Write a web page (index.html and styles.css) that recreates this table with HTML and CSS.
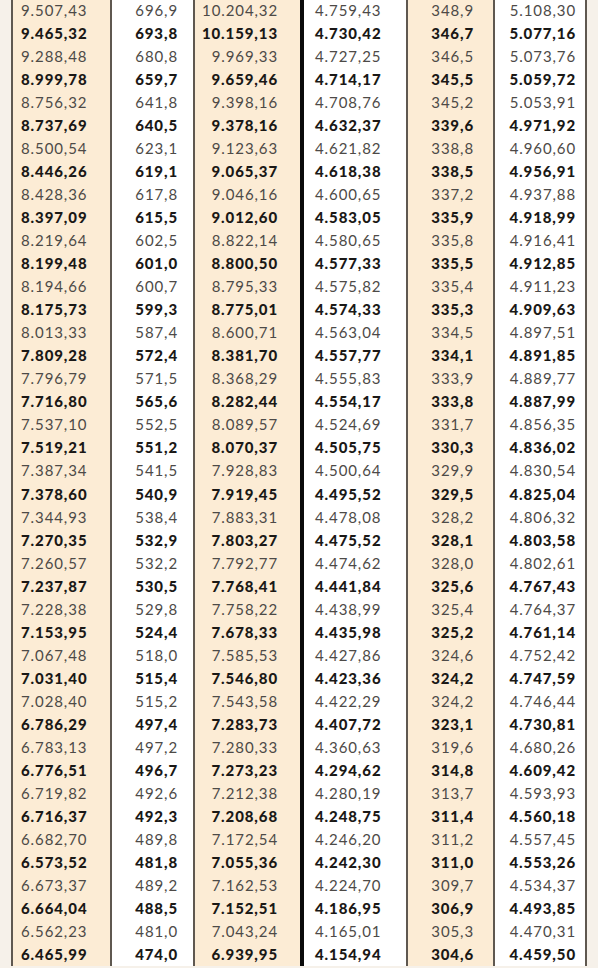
FILE: index.html
```html
<!DOCTYPE html>
<html lang="tr">
<head>
<meta charset="utf-8">
<title>Tablo</title>
<link rel="stylesheet" href="styles.css">
</head>
<body>
<div class="sheet">
<div class="grid">
<div class="c">9.507,43</div><div class="c">696,9</div><div class="c">10.204,32</div><div class="c">4.759,43</div><div class="c">348,9</div><div class="c">5.108,30</div>
<div class="c b">9.465,32</div><div class="c b">693,8</div><div class="c b">10.159,13</div><div class="c b">4.730,42</div><div class="c b">346,7</div><div class="c b">5.077,16</div>
<div class="c">9.288,48</div><div class="c">680,8</div><div class="c">9.969,33</div><div class="c">4.727,25</div><div class="c">346,5</div><div class="c">5.073,76</div>
<div class="c b">8.999,78</div><div class="c b">659,7</div><div class="c b">9.659,46</div><div class="c b">4.714,17</div><div class="c b">345,5</div><div class="c b">5.059,72</div>
<div class="c">8.756,32</div><div class="c">641,8</div><div class="c">9.398,16</div><div class="c">4.708,76</div><div class="c">345,2</div><div class="c">5.053,91</div>
<div class="c b">8.737,69</div><div class="c b">640,5</div><div class="c b">9.378,16</div><div class="c b">4.632,37</div><div class="c b">339,6</div><div class="c b">4.971,92</div>
<div class="c">8.500,54</div><div class="c">623,1</div><div class="c">9.123,63</div><div class="c">4.621,82</div><div class="c">338,8</div><div class="c">4.960,60</div>
<div class="c b">8.446,26</div><div class="c b">619,1</div><div class="c b">9.065,37</div><div class="c b">4.618,38</div><div class="c b">338,5</div><div class="c b">4.956,91</div>
<div class="c">8.428,36</div><div class="c">617,8</div><div class="c">9.046,16</div><div class="c">4.600,65</div><div class="c">337,2</div><div class="c">4.937,88</div>
<div class="c b">8.397,09</div><div class="c b">615,5</div><div class="c b">9.012,60</div><div class="c b">4.583,05</div><div class="c b">335,9</div><div class="c b">4.918,99</div>
<div class="c">8.219,64</div><div class="c">602,5</div><div class="c">8.822,14</div><div class="c">4.580,65</div><div class="c">335,8</div><div class="c">4.916,41</div>
<div class="c b">8.199,48</div><div class="c b">601,0</div><div class="c b">8.800,50</div><div class="c b">4.577,33</div><div class="c b">335,5</div><div class="c b">4.912,85</div>
<div class="c">8.194,66</div><div class="c">600,7</div><div class="c">8.795,33</div><div class="c">4.575,82</div><div class="c">335,4</div><div class="c">4.911,23</div>
<div class="c b">8.175,73</div><div class="c b">599,3</div><div class="c b">8.775,01</div><div class="c b">4.574,33</div><div class="c b">335,3</div><div class="c b">4.909,63</div>
<div class="c">8.013,33</div><div class="c">587,4</div><div class="c">8.600,71</div><div class="c">4.563,04</div><div class="c">334,5</div><div class="c">4.897,51</div>
<div class="c b">7.809,28</div><div class="c b">572,4</div><div class="c b">8.381,70</div><div class="c b">4.557,77</div><div class="c b">334,1</div><div class="c b">4.891,85</div>
<div class="c">7.796,79</div><div class="c">571,5</div><div class="c">8.368,29</div><div class="c">4.555,83</div><div class="c">333,9</div><div class="c">4.889,77</div>
<div class="c b">7.716,80</div><div class="c b">565,6</div><div class="c b">8.282,44</div><div class="c b">4.554,17</div><div class="c b">333,8</div><div class="c b">4.887,99</div>
<div class="c">7.537,10</div><div class="c">552,5</div><div class="c">8.089,57</div><div class="c">4.524,69</div><div class="c">331,7</div><div class="c">4.856,35</div>
<div class="c b">7.519,21</div><div class="c b">551,2</div><div class="c b">8.070,37</div><div class="c b">4.505,75</div><div class="c b">330,3</div><div class="c b">4.836,02</div>
<div class="c">7.387,34</div><div class="c">541,5</div><div class="c">7.928,83</div><div class="c">4.500,64</div><div class="c">329,9</div><div class="c">4.830,54</div>
<div class="c b">7.378,60</div><div class="c b">540,9</div><div class="c b">7.919,45</div><div class="c b">4.495,52</div><div class="c b">329,5</div><div class="c b">4.825,04</div>
<div class="c">7.344,93</div><div class="c">538,4</div><div class="c">7.883,31</div><div class="c">4.478,08</div><div class="c">328,2</div><div class="c">4.806,32</div>
<div class="c b">7.270,35</div><div class="c b">532,9</div><div class="c b">7.803,27</div><div class="c b">4.475,52</div><div class="c b">328,1</div><div class="c b">4.803,58</div>
<div class="c">7.260,57</div><div class="c">532,2</div><div class="c">7.792,77</div><div class="c">4.474,62</div><div class="c">328,0</div><div class="c">4.802,61</div>
<div class="c b">7.237,87</div><div class="c b">530,5</div><div class="c b">7.768,41</div><div class="c b">4.441,84</div><div class="c b">325,6</div><div class="c b">4.767,43</div>
<div class="c">7.228,38</div><div class="c">529,8</div><div class="c">7.758,22</div><div class="c">4.438,99</div><div class="c">325,4</div><div class="c">4.764,37</div>
<div class="c b">7.153,95</div><div class="c b">524,4</div><div class="c b">7.678,33</div><div class="c b">4.435,98</div><div class="c b">325,2</div><div class="c b">4.761,14</div>
<div class="c">7.067,48</div><div class="c">518,0</div><div class="c">7.585,53</div><div class="c">4.427,86</div><div class="c">324,6</div><div class="c">4.752,42</div>
<div class="c b">7.031,40</div><div class="c b">515,4</div><div class="c b">7.546,80</div><div class="c b">4.423,36</div><div class="c b">324,2</div><div class="c b">4.747,59</div>
<div class="c">7.028,40</div><div class="c">515,2</div><div class="c">7.543,58</div><div class="c">4.422,29</div><div class="c">324,2</div><div class="c">4.746,44</div>
<div class="c b">6.786,29</div><div class="c b">497,4</div><div class="c b">7.283,73</div><div class="c b">4.407,72</div><div class="c b">323,1</div><div class="c b">4.730,81</div>
<div class="c">6.783,13</div><div class="c">497,2</div><div class="c">7.280,33</div><div class="c">4.360,63</div><div class="c">319,6</div><div class="c">4.680,26</div>
<div class="c b">6.776,51</div><div class="c b">496,7</div><div class="c b">7.273,23</div><div class="c b">4.294,62</div><div class="c b">314,8</div><div class="c b">4.609,42</div>
<div class="c">6.719,82</div><div class="c">492,6</div><div class="c">7.212,38</div><div class="c">4.280,19</div><div class="c">313,7</div><div class="c">4.593,93</div>
<div class="c b">6.716,37</div><div class="c b">492,3</div><div class="c b">7.208,68</div><div class="c b">4.248,75</div><div class="c b">311,4</div><div class="c b">4.560,18</div>
<div class="c">6.682,70</div><div class="c">489,8</div><div class="c">7.172,54</div><div class="c">4.246,20</div><div class="c">311,2</div><div class="c">4.557,45</div>
<div class="c b">6.573,52</div><div class="c b">481,8</div><div class="c b">7.055,36</div><div class="c b">4.242,30</div><div class="c b">311,0</div><div class="c b">4.553,26</div>
<div class="c">6.673,37</div><div class="c">489,2</div><div class="c">7.162,53</div><div class="c">4.224,70</div><div class="c">309,7</div><div class="c">4.534,37</div>
<div class="c b">6.664,04</div><div class="c b">488,5</div><div class="c b">7.152,51</div><div class="c b">4.186,95</div><div class="c b">306,9</div><div class="c b">4.493,85</div>
<div class="c">6.562,23</div><div class="c">481,0</div><div class="c">7.043,24</div><div class="c">4.165,01</div><div class="c">305,3</div><div class="c">4.470,31</div>
<div class="c b">6.465,99</div><div class="c b">474,0</div><div class="c b">6.939,95</div><div class="c b">4.154,94</div><div class="c b">304,6</div><div class="c b">4.459,50</div>
</div>
</div>
</body>
</html>
```
FILE: styles.css
```css
html, body {
  margin: 0;
  padding: 0;
  background: #f6f1ea;
}
.sheet {
  width: 598px;
  height: 968px;
  overflow: hidden;
  padding-left: 11px;
  box-sizing: border-box;
}
.grid {
  display: grid;
  grid-template-columns: 99px 83px 107px 106px 87px 92px;
  grid-auto-rows: 23.05px;
  margin-top: -1.5px;
  width: max-content;
  border-right: 2px solid #5f5850;
  font-family: "Lato", "Liberation Sans", sans-serif;
  font-size: 15px;
  letter-spacing: 0.9px;
  color: #4d4a47;
  font-weight: 400;
}
.c {
  display: flex;
  align-items: center;
  border-left: 2px solid #5f5850;
  white-space: nowrap;
  line-height: 1;
}
.b {
  font-weight: 900;
  letter-spacing: 0.9px;
  color: #1a1816;
}
.c:nth-child(6n+1) { background: #fcecd5; justify-content: flex-start; padding-left: 8px; }
.c:nth-child(6n+2) { background: #ffffff; justify-content: flex-end; padding-right: 15px; }
.c:nth-child(6n+3) { background: #fcecd5; justify-content: flex-end; padding-right: 22px; }
.c:nth-child(6n+4) { background: #ffffff; justify-content: flex-start; padding-left: 11px; border-left: 4px solid #0a0a0a; }
.c:nth-child(6n+5) { background: #fcecd5; justify-content: flex-end; padding-right: 19px; }
.c:nth-child(6n+6) { background: #ffffff; justify-content: flex-end; padding-right: 9px; }
```
